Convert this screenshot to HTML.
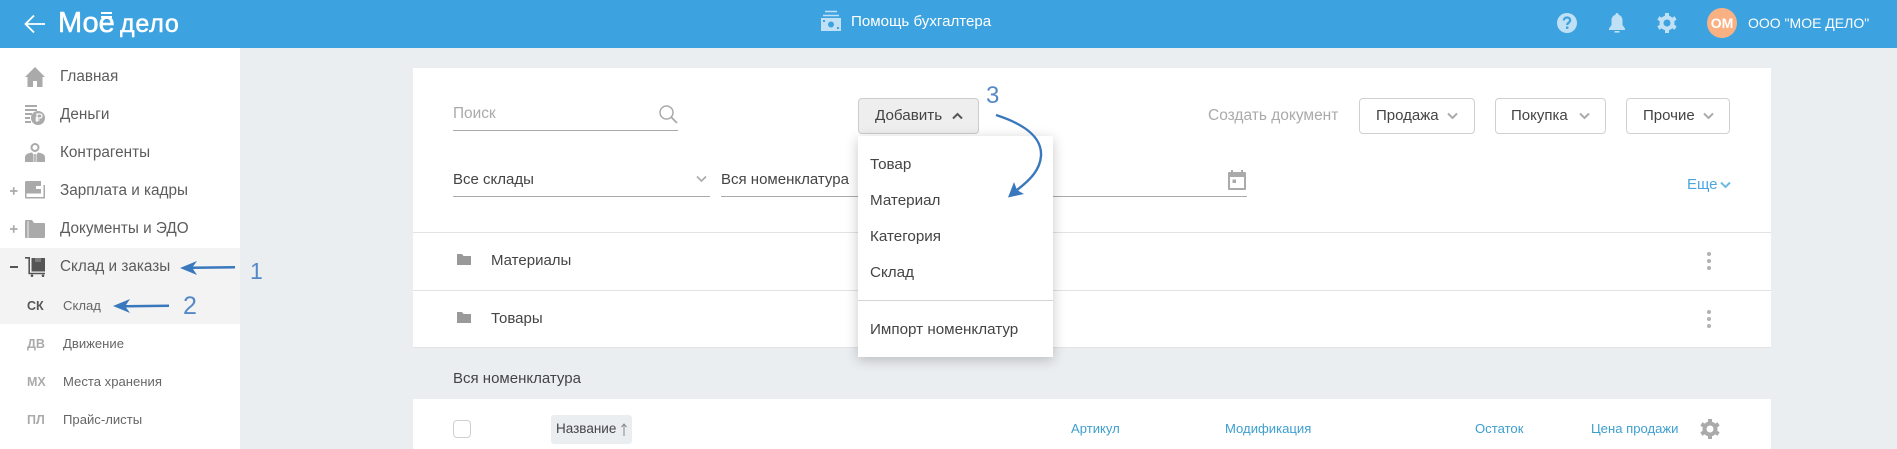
<!DOCTYPE html>
<html lang="ru"><head><meta charset="utf-8"><title>Склад</title>
<style>
html,body{margin:0;padding:0}
body{width:1897px;height:449px;overflow:hidden;position:relative;background:#ebeef1;font-family:"Liberation Sans",sans-serif;color:#444;font-size:14px}
.a{position:absolute;white-space:nowrap;line-height:20px}
.box{position:absolute;box-sizing:border-box}
svg{position:absolute;overflow:visible}
.nav{color:#5c5c5c;font-size:15.3px;left:60px}
.sub{color:#666;font-size:13.1px;left:63px}
.ab{color:#aaa;font-size:12.5px;font-weight:bold;left:27px}
.btn{position:absolute;box-sizing:border-box;top:98px;height:36px;border:1px solid #d0d0d0;border-radius:4px;background:#fff}
.th{color:#3d9fcf;font-size:13.1px;top:419px}
.mi{left:870px;color:#444;font-size:15.2px}
</style></head><body>

<div class="box" style="left:0;top:0;width:1897px;height:48px;background:#3da3e0"></div>
<svg style="left:24px;top:13px" width="22" height="22" viewBox="0 0 22 22"><path d="M21 11H2M10 2.500L1.500 11 10 19.500" fill="none" stroke="#fff" stroke-width="1.800"/></svg>
<div class="a" style="left:58px;top:7px;line-height:32px;font-size:29px;color:#fff;-webkit-text-stroke:.5px #fff">Мое</div>
<div class="box" style="left:101px;top:12px;width:11px;height:2px;background:#fff"></div>
<div class="box" style="left:101px;top:16px;width:11px;height:2px;background:#fff"></div>
<div class="a" style="left:120px;top:8px;line-height:32px;font-size:25px;color:#fff;letter-spacing:.8px;-webkit-text-stroke:.5px #fff">дело</div>

<svg style="left:821px;top:11px" width="20" height="20" viewBox="0 0 20 20"><path d="M4 0.500H16M2 4.500H18" stroke="#bfe0f5" stroke-width="1.600"/><path d="M0 7H20V20H0Z" fill="#bfe0f5"/><circle cx="10" cy="13.500" r="3" fill="#3da3e0"/><path d="M2 9h2v2H2zM16 16h2v2h-2z" fill="#3da3e0"/></svg>
<div class="a" style="left:851px;top:12px;color:#fff;font-size:15.100px">Помощь бухгалтера</div>

<svg style="left:1557px;top:13px" width="20" height="20" viewBox="0 0 20 20"><circle cx="10" cy="10" r="10" fill="#bfe0f5"/><path d="M6.800 7.500C6.800 5.500 8.300 4.500 10 4.500S13.200 5.600 13.200 7.300C13.200 9.500 10.200 9.700 10.200 12" fill="none" stroke="#3da3e0" stroke-width="2.200"/><rect x="9" y="13.500" width="2.400" height="2.400" fill="#3da3e0"/></svg>
<svg style="left:1609px;top:13px" width="16" height="20" viewBox="0 0 16 20"><path d="M8 0a1.500 1.500 0 0 1 1.500 1.800C12 2.500 13.500 4.500 13.500 7.500V12L16 15.500V17H0V15.500L2.500 12V7.500C2.500 4.500 4 2.500 6.500 1.800A1.500 1.500 0 0 1 8 0Z" fill="#bfe0f5"/><rect x="5.500" y="18" width="5" height="1.600" fill="#bfe0f5"/></svg>
<svg style="left:1657px;top:13px" width="20" height="20" viewBox="-10 -10 20 20"><g fill="#bfe0f5"><circle r="7.500"/><rect x="-2" y="-10" width="4" height="20"/><rect x="-2" y="-10" width="4" height="20" transform="rotate(60)"/><rect x="-2" y="-10" width="4" height="20" transform="rotate(120)"/></g><circle r="3.500" fill="#3da3e0"/></svg>
<div class="box" style="left:1707px;top:8px;width:30px;height:30px;border-radius:50%;background:#f9b183"></div>
<div class="a" style="left:1707px;top:13px;width:30px;text-align:center;color:#fff;font-weight:bold;font-size:14px">ОМ</div>
<div class="a" style="left:1748px;top:13px;color:#fff;font-size:14px">ООО "МОЕ ДЕЛО"</div>

<div class="box" style="left:0;top:48px;width:240px;height:401px;background:#fff"></div>
<div class="box" style="left:0;top:248px;width:240px;height:76px;background:#f3f3f3"></div>

<svg style="left:25px;top:67px" width="20" height="20" viewBox="0 0 20 20"><path d="M10 0L20 10H17.500V20H12V14H8V20H2.500V10H0Z" fill="#aaa"/></svg>
<div class="a nav" style="top:67px">Главная</div>
<svg style="left:25px;top:105px" width="20" height="20" viewBox="0 0 20 20"><path d="M0 0H12V2H0ZM0 4H12V6H0ZM0 8H7V10H0ZM0 12H5V14H0ZM0 16H6V18H0Z" fill="#aaa"/><circle cx="13" cy="13" r="7" fill="#aaa"/><path d="M12 17V9H15A2 2 0 0 1 15 13H10.500M10.500 15H14.500" fill="none" stroke="#fff" stroke-width="1.300"/></svg>
<div class="a nav" style="top:105px">Деньги</div>
<svg style="left:25px;top:143px" width="20" height="20" viewBox="0 0 20 20"><circle cx="10" cy="4.500" r="3.500" fill="none" stroke="#aaa" stroke-width="2"/><path d="M0 19V14C0 11.500 3 10 7 9.500L8.500 11.500V19ZM20 19V14C20 11.500 17 10 13 9.500L11.500 11.500V19ZM9.200 11H10.800V19H9.200Z" fill="#aaa"/></svg>
<div class="a nav" style="top:143px">Контрагенты</div>
<svg style="left:10px;top:187px" width="8" height="8" viewBox="0 0 8 8"><path d="M0 4H7.500M3.750 .200V7.800" stroke="#aaa" stroke-width="1.700"/></svg>
<svg style="left:25px;top:181px" width="20" height="18" viewBox="0 0 20 18"><path d="M0 1.500A1.500 1.500 0 0 1 1.500 0H16V12.500H0Z" fill="#aaa"/><path d="M0 12V16.500A1 1 0 0 0 1 17.500H20V4H18.500V16H1.500V12Z" fill="#aaa"/><rect x="11" y="5" width="5" height="3" fill="#fff"/></svg>
<div class="a nav" style="top:181px">Зарплата и кадры</div>
<svg style="left:10px;top:225px" width="8" height="8" viewBox="0 0 8 8"><path d="M0 4H7.500M3.750 .200V7.800" stroke="#aaa" stroke-width="1.700"/></svg>
<svg style="left:25px;top:220px" width="20" height="18" viewBox="0 0 20 18"><path d="M0 1A1 1 0 0 1 1 0H7L9 3H19A1 1 0 0 1 20 4V17A1 1 0 0 1 19 18H1A1 1 0 0 1 0 17Z" fill="#aaa"/><path d="M3 1.200V18" stroke="#fff" stroke-width=".8"/></svg>
<div class="a nav" style="top:219px">Документы и ЭДО</div>
<div class="box" style="left:10px;top:266px;width:8px;height:2px;background:#555"></div>
<svg style="left:25px;top:257px" width="20" height="20" viewBox="0 0 20 20"><path d="M0 .800H4.200V16.500H20" fill="none" stroke="#555" stroke-width="1.600"/><rect x="6.500" y="1" width="13.500" height="13.500" fill="#555"/><rect x="10" y="1" width="6" height="4" fill="#f3f3f3" opacity=".25"/><circle cx="7" cy="18.700" r="1.300" fill="#555"/><circle cx="18" cy="18.700" r="1.300" fill="#555"/></svg>
<div class="a nav" style="top:257px">Склад и заказы</div>
<div class="a ab" style="top:296px;color:#555">СК</div><div class="a sub" style="top:296px">Склад</div>
<div class="a ab" style="top:334px">ДВ</div><div class="a sub" style="top:334px">Движение</div>
<div class="a ab" style="top:372px">МХ</div><div class="a sub" style="top:372px">Места хранения</div>
<div class="a ab" style="top:410px">ПЛ</div><div class="a sub" style="top:410px">Прайс-листы</div>

<div class="box" style="left:413px;top:68px;width:1358px;height:280px;background:#fff"></div>
<div class="box" style="left:413px;top:232px;width:1358px;height:1px;background:#e3e3e3"></div>
<div class="box" style="left:413px;top:290px;width:1358px;height:1px;background:#e3e3e3"></div>
<div class="box" style="left:413px;top:347px;width:1358px;height:1px;background:#e3e3e3"></div>

<div class="a" style="left:453px;top:104px;color:#aaa;font-size:15.400px">Поиск</div>
<svg style="left:659px;top:105px" width="19" height="19" viewBox="0 0 19 19"><circle cx="7.500" cy="7.500" r="6.500" fill="none" stroke="#aaa" stroke-width="1.500"/><path d="M12.300 12.300L18 18" stroke="#aaa" stroke-width="1.800"/></svg>
<div class="box" style="left:453px;top:130px;width:225px;height:1px;background:#aaa"></div>

<div class="btn" style="left:858px;width:121px;background:#eee;border-color:#ccc"></div>
<div class="a" style="left:875px;top:106px;color:#444;font-size:15.200px">Добавить</div>
<svg style="left:952px;top:112px" width="11" height="8" viewBox="0 0 11 8"><path d="M1 6.500L5.500 2 10 6.500" fill="none" stroke="#555" stroke-width="2"/></svg>

<div class="a" style="left:1208px;top:106px;color:#aaa;font-size:15.500px">Создать документ</div>
<div class="btn" style="left:1359px;width:116px"></div>
<div class="a" style="left:1376px;top:106px;font-size:15px;color:#444">Продажа</div>
<svg style="left:1447px;top:112px" width="11" height="8" viewBox="0 0 11 8"><path d="M1 1.500L5.500 6 10 1.500" fill="none" stroke="#aaa" stroke-width="2"/></svg>
<div class="btn" style="left:1495px;width:111px"></div>
<div class="a" style="left:1511px;top:106px;font-size:15px;color:#444">Покупка</div>
<svg style="left:1579px;top:112px" width="11" height="8" viewBox="0 0 11 8"><path d="M1 1.500L5.500 6 10 1.500" fill="none" stroke="#aaa" stroke-width="2"/></svg>
<div class="btn" style="left:1626px;width:104px"></div>
<div class="a" style="left:1643px;top:106px;font-size:15px;color:#444">Прочие</div>
<svg style="left:1703px;top:112px" width="11" height="8" viewBox="0 0 11 8"><path d="M1 1.500L5.500 6 10 1.500" fill="none" stroke="#aaa" stroke-width="2"/></svg>

<div class="a" style="left:453px;top:170px;font-size:15px;color:#444">Все склады</div>
<svg style="left:696px;top:175px" width="11" height="8" viewBox="0 0 11 8"><path d="M1 1.500L5.500 6 10 1.500" fill="none" stroke="#aaa" stroke-width="1.600"/></svg>
<div class="box" style="left:453px;top:196px;width:257px;height:1px;background:#aaa"></div>
<div class="a" style="left:721px;top:170px;font-size:15px;color:#444">Вся номенклатура</div>
<div class="box" style="left:721px;top:196px;width:526px;height:1px;background:#aaa"></div>
<svg style="left:1228px;top:170px" width="18" height="20" viewBox="0 0 18 20"><path d="M3 0H5V2H13V0H15V2H17A1 1 0 0 1 18 3V19A1 1 0 0 1 17 20H1A1 1 0 0 1 0 19V3A1 1 0 0 1 1 2H3ZM2 7V18H16V7ZM4.500 9.500H8V13H4.500Z" fill="#aaa" fill-rule="evenodd"/></svg>
<div class="a" style="left:1687px;top:175px;color:#4ba6e0;font-size:15px">Еще</div>
<svg style="left:1720px;top:181px" width="11" height="8" viewBox="0 0 11 8"><path d="M1 1.500L5.500 6 10 1.500" fill="none" stroke="#6cbce0" stroke-width="2"/></svg>

<svg style="left:457px;top:253px" width="14" height="12" viewBox="0 0 14 12"><path d="M0 1H5L6.500 3H14V12H0Z" fill="#999"/></svg>
<div class="a" style="left:491px;top:251px;font-size:15px;color:#444">Материалы</div>
<svg style="left:457px;top:311px" width="14" height="12" viewBox="0 0 14 12"><path d="M0 1H5L6.500 3H14V12H0Z" fill="#999"/></svg>
<div class="a" style="left:491px;top:309px;font-size:15px;color:#444">Товары</div>
<svg style="left:1705px;top:250px" width="8" height="80" viewBox="0 0 8 80"><g fill="#b2b2b2"><circle cx="4" cy="4" r="2"/><circle cx="4" cy="11" r="2"/><circle cx="4" cy="18" r="2"/><circle cx="4" cy="62" r="2"/><circle cx="4" cy="69" r="2"/><circle cx="4" cy="76" r="2"/></g></svg>

<div class="a" style="left:453px;top:369px;font-size:15px;color:#444">Вся номенклатура</div>

<div class="box" style="left:413px;top:399px;width:1358px;height:50px;background:#fff"></div>
<div class="box" style="left:453px;top:420px;width:18px;height:18px;border:1px solid #d0d0d0;border-radius:4px"></div>
<div class="box" style="left:551px;top:415px;width:81px;height:29px;border-radius:3px;background:#ebeef1"></div>
<div class="a" style="left:556px;top:419px;font-size:13.500px;color:#444">Название</div>
<svg style="left:620px;top:423px" width="8" height="13" viewBox="0 0 8 13"><path d="M4 13V1M1.500 4L4 1 6.500 4" fill="none" stroke="#888" stroke-width="1"/></svg>
<div class="a th" style="left:1071px">Артикул</div>
<div class="a th" style="left:1225px">Модификация</div>
<div class="a th" style="left:1475px">Остаток</div>
<div class="a th" style="left:1591px">Цена продажи</div>
<svg style="left:1700px;top:419px" width="20" height="20" viewBox="-10 -10 20 20"><g fill="#aaa"><circle r="7.500"/><rect x="-2" y="-10" width="4" height="20"/><rect x="-2" y="-10" width="4" height="20" transform="rotate(60)"/><rect x="-2" y="-10" width="4" height="20" transform="rotate(120)"/></g><circle r="3.500" fill="#fff"/></svg>

<div class="box" style="left:858px;top:136px;width:195px;height:221px;background:#fff;box-shadow:0 3px 12px rgba(0,0,0,.22)"></div>
<div class="a mi" style="top:155px">Товар</div>
<div class="a mi" style="top:191px">Материал</div>
<div class="a mi" style="top:227px">Категория</div>
<div class="a mi" style="top:263px">Склад</div>
<div class="box" style="left:858px;top:300px;width:195px;height:1px;background:#d5d5d5"></div>
<div class="a mi" style="top:320px">Импорт номенклатур</div>

<svg style="left:0;top:0" width="1897" height="449" viewBox="0 0 1897 449">
<g fill="#3a78bd" stroke="none">
<path d="M180 268L197 261L193 266.500L235 266V268.500L193 269L197 275Z"/>
<path d="M113 306L130 299L126 305L169 304.500V307L126 307.500L130 313Z"/>
<path d="M1008 197.500L1014 182L1017 190L1024 194Z"/>
</g>
<path d="M996 115C1030 126 1042 140 1041 156C1040 170 1030 180 1017 190" fill="none" stroke="#3a78bd" stroke-width="2.400"/>
<text x="250" y="279" font-family="Liberation Sans" font-size="23" fill="#5589c6">1</text>
<text x="183" y="314" font-family="Liberation Sans" font-size="25" fill="#5589c6">2</text>
<text x="986" y="103" font-family="Liberation Sans" font-size="24" fill="#5589c6">3</text>
</svg>
</body></html>
